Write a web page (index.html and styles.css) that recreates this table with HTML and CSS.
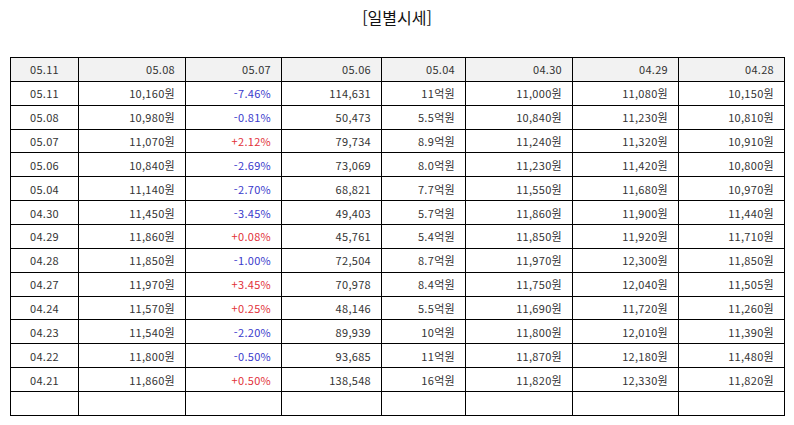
FILE: index.html
```html
<!DOCTYPE html>
<html lang="ko">
<head>
<meta charset="utf-8">
<link rel="stylesheet" href="styles.css">
</head>
<body>
<div class="page">
  <h1 class="title">[일별시세]</h1>
  <table class="grid">
    <colgroup>
      <col class="c1"><col class="c2"><col class="c3"><col class="c4"><col class="c5"><col class="c6"><col class="c7"><col class="c8">
    </colgroup>
    <thead>
      <tr><th class="date">05.11</th><th>05.08</th><th>05.07</th><th>05.06</th><th>05.04</th><th>04.30</th><th>04.29</th><th>04.28</th></tr>
    </thead>
    <tbody>
      <tr><td class="date">05.11</td><td>10,160원</td><td class="dn">-7.46%</td><td>114,631</td><td>11억원</td><td>11,000원</td><td>11,080원</td><td>10,150원</td></tr>
      <tr><td class="date">05.08</td><td>10,980원</td><td class="dn">-0.81%</td><td>50,473</td><td>5.5억원</td><td>10,840원</td><td>11,230원</td><td>10,810원</td></tr>
      <tr><td class="date">05.07</td><td>11,070원</td><td class="up">+2.12%</td><td>79,734</td><td>8.9억원</td><td>11,240원</td><td>11,320원</td><td>10,910원</td></tr>
      <tr><td class="date">05.06</td><td>10,840원</td><td class="dn">-2.69%</td><td>73,069</td><td>8.0억원</td><td>11,230원</td><td>11,420원</td><td>10,800원</td></tr>
      <tr><td class="date">05.04</td><td>11,140원</td><td class="dn">-2.70%</td><td>68,821</td><td>7.7억원</td><td>11,550원</td><td>11,680원</td><td>10,970원</td></tr>
      <tr><td class="date">04.30</td><td>11,450원</td><td class="dn">-3.45%</td><td>49,403</td><td>5.7억원</td><td>11,860원</td><td>11,900원</td><td>11,440원</td></tr>
      <tr><td class="date">04.29</td><td>11,860원</td><td class="up">+0.08%</td><td>45,761</td><td>5.4억원</td><td>11,850원</td><td>11,920원</td><td>11,710원</td></tr>
      <tr><td class="date">04.28</td><td>11,850원</td><td class="dn">-1.00%</td><td>72,504</td><td>8.7억원</td><td>11,970원</td><td>12,300원</td><td>11,850원</td></tr>
      <tr><td class="date">04.27</td><td>11,970원</td><td class="up">+3.45%</td><td>70,978</td><td>8.4억원</td><td>11,750원</td><td>12,040원</td><td>11,505원</td></tr>
      <tr><td class="date">04.24</td><td>11,570원</td><td class="up">+0.25%</td><td>48,146</td><td>5.5억원</td><td>11,690원</td><td>11,720원</td><td>11,260원</td></tr>
      <tr><td class="date">04.23</td><td>11,540원</td><td class="dn">-2.20%</td><td>89,939</td><td>10억원</td><td>11,800원</td><td>12,010원</td><td>11,390원</td></tr>
      <tr><td class="date">04.22</td><td>11,800원</td><td class="dn">-0.50%</td><td>93,685</td><td>11억원</td><td>11,870원</td><td>12,180원</td><td>11,480원</td></tr>
      <tr><td class="date">04.21</td><td>11,860원</td><td class="up">+0.50%</td><td>138,548</td><td>16억원</td><td>11,820원</td><td>12,330원</td><td>11,820원</td></tr>
      <tr><td class="date"></td><td></td><td></td><td></td><td></td><td></td><td></td><td></td></tr>
    </tbody>
  </table>
</div>
</body>
</html>
```
FILE: styles.css
```css
html, body {
  margin: 0;
  padding: 0;
  background: #ffffff;
}
body {
  font-family: "Noto Sans CJK KR", "Noto Sans", sans-serif;
  color: #333333;
}
.page {
  padding: 6px 10px 0 10px;
}
.title {
  margin: 0;
  font-size: 16px;
  font-weight: normal;
  line-height: 22px;
  text-align: center;
  color: #111111;
}
.grid {
  margin-top: 29px;
  width: 770px;
  border-collapse: collapse;
  table-layout: fixed;
  font-size: 11px;
  letter-spacing: 0.3px;
}
.c1 { width: 68px; }
.c2 { width: 107px; }
.c3 { width: 96px; }
.c4 { width: 100px; }
.c5 { width: 84px; }
.c6 { width: 107px; }
.c7 { width: 106px; }
.c8 { width: 106px; }
.grid th,
.grid td {
  border: 1px solid #000000;
  height: 22.87px;
  padding: 0 10px 0 4px;
  text-align: right;
  font-weight: normal;
  line-height: 14px;
  white-space: nowrap;
  color: #333333;
}
.grid th {
  background: #f2f2f2;
}
.grid .date {
  text-align: center;
  padding: 0;
}
.grid .dn { color: #3a3acc; }
.grid .up { color: #e2313a; }
```
